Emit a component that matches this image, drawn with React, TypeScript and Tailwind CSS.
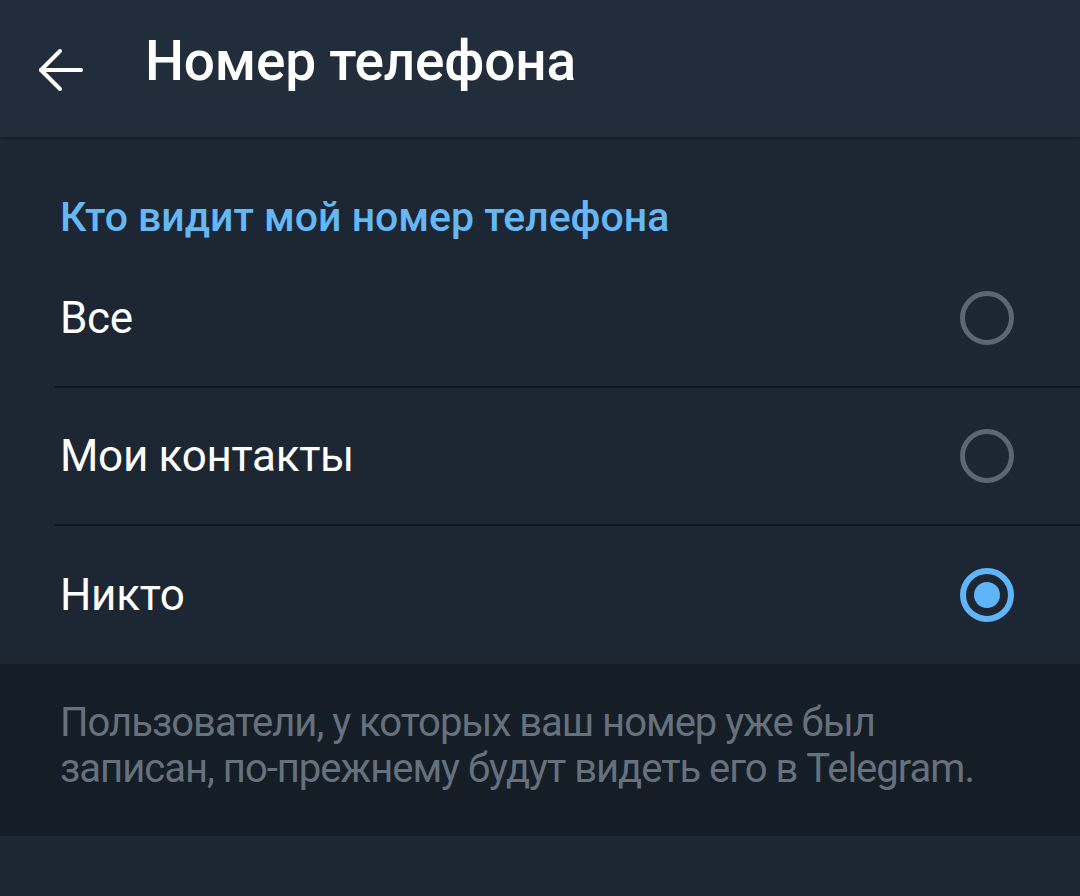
const options = [
    { label: "Все", checked: false },
    { label: "Мои контакты", checked: false },
    { label: "Никто", checked: true },
]

const Radio = ({ checked }: { checked: boolean }) => {
    if (checked) {
        return (
            <div className="flex items-center justify-center w-[54px] h-[54px] rounded-full border-[6px] border-[#5eb5f7]">
                <div className="w-[26px] h-[26px] rounded-full bg-[#5eb5f7]" />
            </div>
        )
    }
    return <div className="w-[54px] h-[54px] rounded-full border-[5px] border-[#5c6773]" />
}

export default function App() {
    return (
        <div className="flex flex-col w-[1080px] h-[896px] bg-[#1d2733] font-['Roboto',sans-serif]">
            <header className="flex flex-row items-center h-[137px] bg-[#212d3b] shadow-[0_2px_3px_rgba(0,0,0,0.25)] z-[1]">
                <svg className="ml-[38px] mt-[2px]" width="46" height="46" viewBox="0 0 46 46" fill="none" stroke="white" strokeWidth="4" strokeLinecap="round" strokeLinejoin="round">
                    <path d="M3 23 H43" />
                    <path d="M22 4 L3 23 L22 42" />
                </svg>
                <h1 className="ml-[61px] pb-[14px] text-[55px] font-medium text-white tracking-[-0.2px]">Номер телефона</h1>
            </header>
            <section className="flex flex-col bg-[#1d2733]">
                <h3 className="pl-[60px] pt-[57px] pb-[10px] text-[41px] leading-[46px] font-medium text-[#64b8f5]">
                    Кто видит мой номер телефона
                </h3>
                {options.map((opt, i) => (
                    <div key={opt.label} className={`flex flex-row items-center justify-between ml-[55px] pl-[5px] pr-[66px] h-[138px] ${i < options.length - 1 ? "border-b-2 border-[#10171f]" : ""}`}>
                        <span className="text-[44px] text-white tracking-[-0.3px]">{opt.label}</span>
                        <Radio checked={opt.checked} />
                    </div>
                ))}
            </section>
            <div className="h-[172px] bg-[#151e27] px-[60px] pt-[36px]">
                <p className="text-[40px] leading-[46px] text-[#66717d] tracking-[-1px] max-w-[960px]">
                    Пользователи, у которых ваш номер уже был<br />
                    записан, по-прежнему будут видеть его в Telegram.
                </p>
            </div>
        </div>
    )
}
